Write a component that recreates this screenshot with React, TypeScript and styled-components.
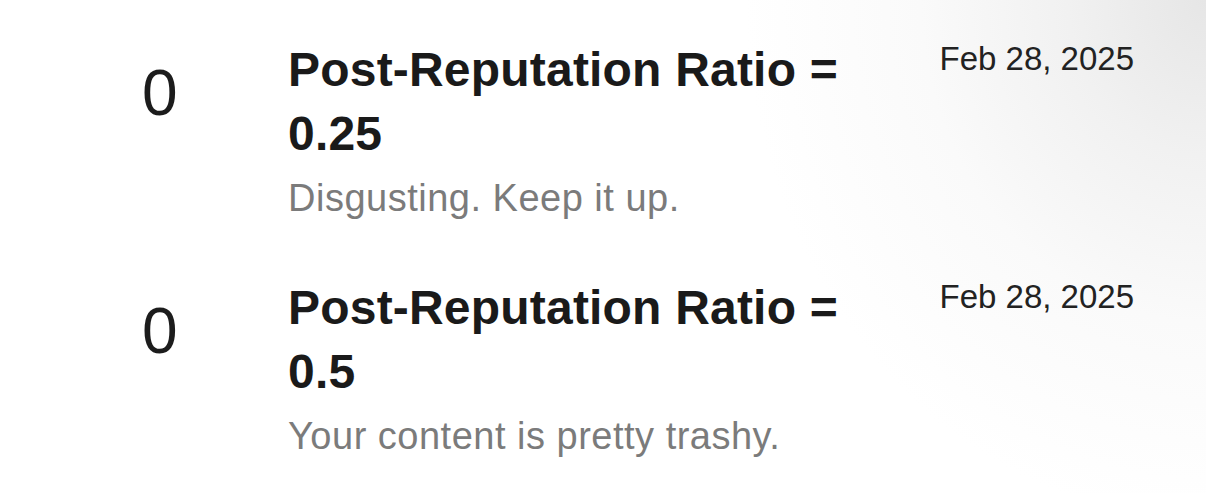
import styled, { createGlobalStyle } from 'styled-components';

type Notice = {
  score: number;
  title: string;
  message: string;
  date: string;
};

const notices: Notice[] = [
  {
    score: 0,
    title: 'Post-Reputation Ratio = 0.25',
    message: 'Disgusting. Keep it up.',
    date: 'Feb 28, 2025',
  },
  {
    score: 0,
    title: 'Post-Reputation Ratio = 0.5',
    message: 'Your content is pretty trashy.',
    date: 'Feb 28, 2025',
  },
];

function App() {
  return (
    <>
      <GlobalStyle />
      <Page>
        <List>
          {notices.map((notice, i) => (
            <Row key={i}>
              <Score>{notice.score}</Score>
              <Body>
                <Title>{notice.title}</Title>
                <Message>{notice.message}</Message>
              </Body>
              <DateLabel>{notice.date}</DateLabel>
            </Row>
          ))}
        </List>
      </Page>
    </>
  );
}

const GlobalStyle = createGlobalStyle`
  html, body {
    margin: 0;
    padding: 0;
    height: 100%;
  }

  body {
    font-family: 'Liberation Sans', Arial, Helvetica, sans-serif;
    background: #fff;
  }
`;

const Page = styled.main`
  width: 1206px;
  height: 493px;
  overflow: hidden;
  box-sizing: border-box;
  padding: 38px 72px 0 142px;
  background:
    radial-gradient(
      ellipse 460px 520px at 100% 0%,
      #e6e6e6 0%,
      #f1f1f1 30%,
      #fafafa 62%,
      rgba(255, 255, 255, 0) 100%
    ),
    #fff;
`;

const List = styled.ul`
  list-style: none;
  margin: 0;
  padding: 0;
  display: flex;
  flex-direction: column;
  gap: 54px;
`;

const Row = styled.li`
  display: grid;
  grid-template-columns: 146px 600px 1fr;
  align-items: start;
`;

const Score = styled.span`
  margin-top: 23px;
  font-size: 64px;
  line-height: 1;
  color: #1c1c1c;
`;

const Body = styled.div`
  display: flex;
  flex-direction: column;
`;

const Title = styled.h3`
  margin: 0;
  font-size: 48px;
  font-weight: 700;
  line-height: 64px;
  letter-spacing: 0.2px;
  color: #1a1a1a;
`;

const Message = styled.p`
  margin: 10px 0 0;
  font-size: 38px;
  line-height: 1.2;
  letter-spacing: 0.5px;
  color: #7b7b7b;
`;

const DateLabel = styled.span`
  justify-self: end;
  margin-top: 1px;
  font-size: 33px;
  line-height: 1.2;
  color: #222;
`;

export default App;
